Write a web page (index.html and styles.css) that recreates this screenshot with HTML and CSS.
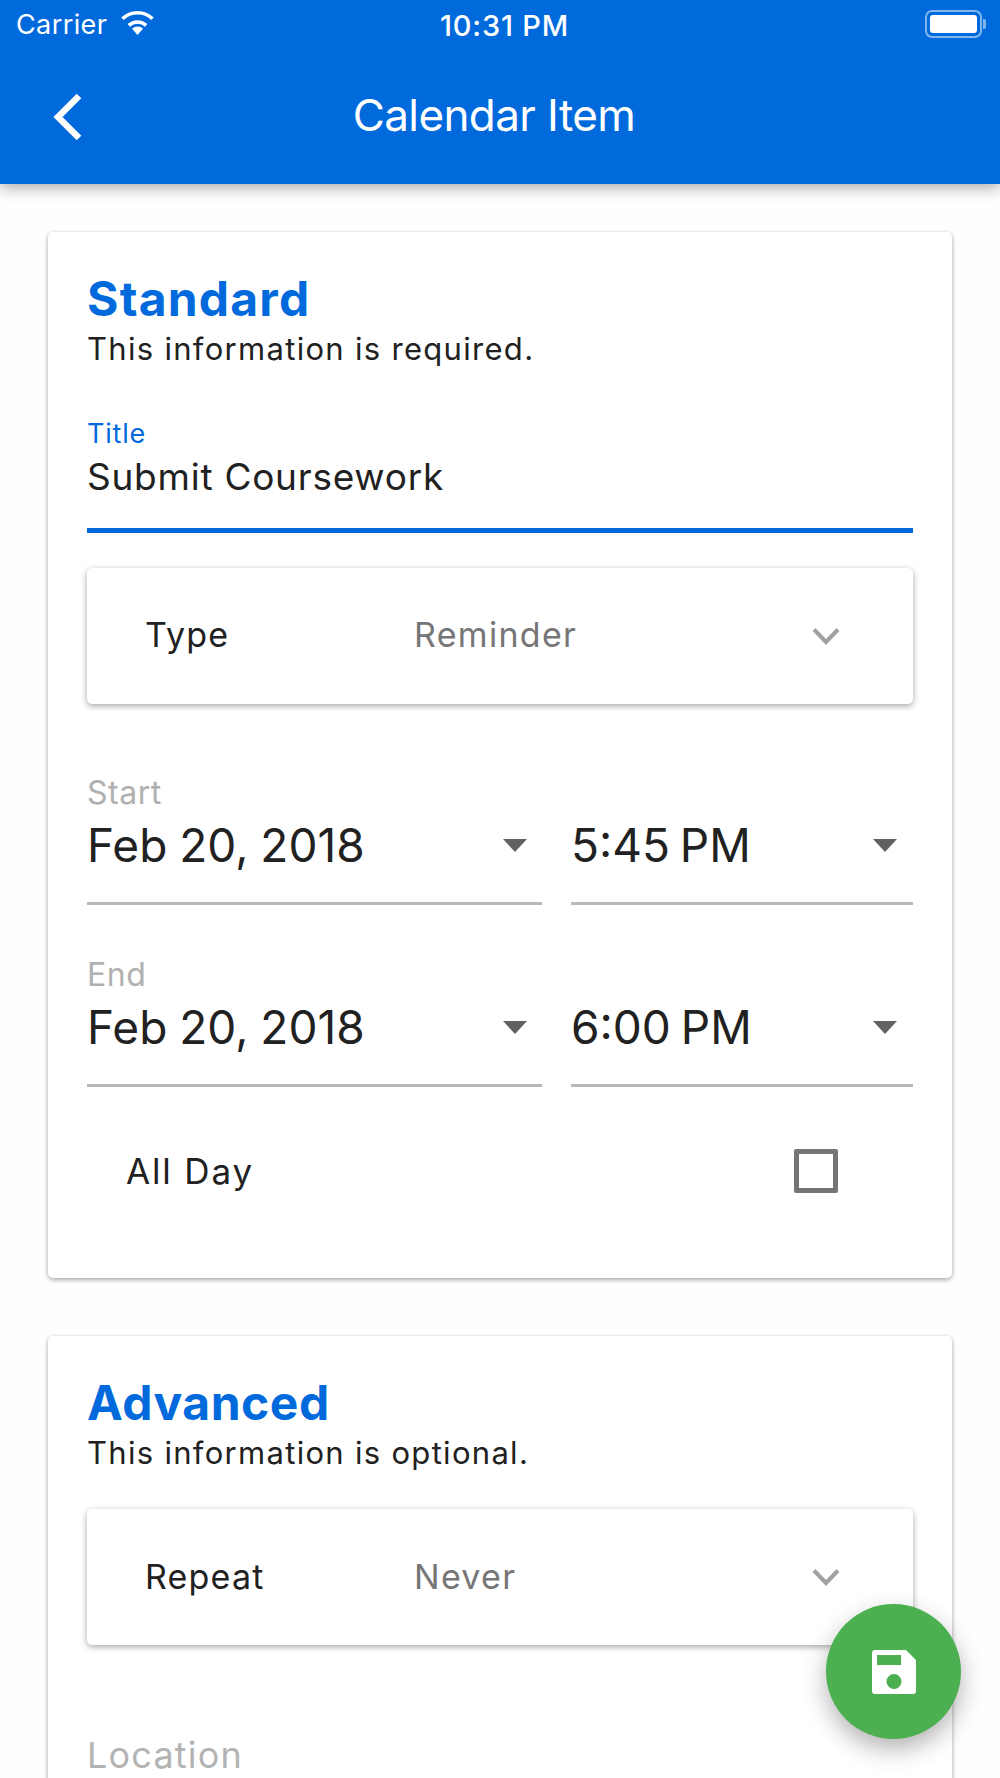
FILE: index.html
```html
<!DOCTYPE html>
<html lang="en">
<head>
<meta charset="utf-8">
<title>Calendar Item</title>
<link rel="stylesheet" href="styles.css">
</head>
<body>
<div class="screen">
  <header class="appbar">
    <div class="status">
      <div class="status-left">
        <span class="carrier">Carrier</span>
        <svg class="wifi" viewBox="0 0 35 24"><path d="M17.500 24 12 17.800a8 8 0 0 1 11 0z" fill="#fff"/><path d="M8.800 14.300a13 13 0 0 1 17.400 0" fill="none" stroke="#fff" stroke-width="3.600"/><path d="M2.500 7.700a22 22 0 0 1 30 0" fill="none" stroke="#fff" stroke-width="3.600"/></svg>
      </div>
      <span class="clock">10:31 PM</span>
      <div class="battery"><span class="battery-fill"></span></div>
    </div>
    <div class="nav">
      <svg class="back" viewBox="0 0 30 48"><path d="M26 3 5 24l21 21" fill="none" stroke="#fff" stroke-width="6.500"/></svg>
      <h1 class="nav-title">Calendar Item</h1>
    </div>
  </header>
  <main class="content">
    <section class="card card-standard">
      <h2 class="card-title">Standard</h2>
      <p class="card-desc">This information is required.</p>
      <div class="input-field">
        <label class="float-label">Title</label>
        <div class="input-value">Submit Coursework</div>
      </div>
      <div class="select-box">
        <span class="select-name">Type</span>
        <span class="select-value">Reminder</span>
        <svg class="chevron" viewBox="0 0 28 18"><path d="M2 2.500 14 15 26 2.500" fill="none" stroke="#a1a1a1" stroke-width="4"/></svg>
      </div>
      <div class="date-block">
        <div class="date-label">Start</div>
        <div class="date-row">
          <div class="picker picker-date"><span>Feb 20, 2018</span><i class="caret"></i></div>
          <div class="picker picker-time"><span>5:45 PM</span><i class="caret"></i></div>
        </div>
      </div>
      <div class="date-block">
        <div class="date-label">End</div>
        <div class="date-row">
          <div class="picker picker-date"><span>Feb 20, 2018</span><i class="caret"></i></div>
          <div class="picker picker-time"><span>6:00 PM</span><i class="caret"></i></div>
        </div>
      </div>
      <div class="check-row">
        <span class="check-label">All Day</span>
        <span class="checkbox"></span>
      </div>
    </section>
    <section class="card card-advanced">
      <h2 class="card-title">Advanced</h2>
      <p class="card-desc">This information is optional.</p>
      <div class="select-box select-repeat">
        <span class="select-name">Repeat</span>
        <span class="select-value">Never</span>
        <svg class="chevron" viewBox="0 0 28 18"><path d="M2 2.500 14 15 26 2.500" fill="none" stroke="#a1a1a1" stroke-width="4"/></svg>
      </div>
      <div class="placeholder">Location</div>
    </section>
  </main>
  <button class="fab" aria-label="Save">
    <svg class="fab-icon" viewBox="0 0 44 44"><path fill-rule="evenodd" fill="#fff" d="M3 0h31l10 10v31a3 3 0 0 1-3 3H3a3 3 0 0 1-3-3V3a3 3 0 0 1 3-3zM5 5v10h24V5zM22 24a7.500 7.500 0 1 0 0 15 7.500 7.500 0 0 0 0-15z"/></svg>
  </button>
</div>
</body>
</html>
```
FILE: styles.css
```css
* { box-sizing: border-box; margin: 0; padding: 0; }
html, body { width: 1000px; height: 1778px; overflow: hidden; background: #fff; }
body { font-family: Inter, "Liberation Sans", sans-serif; color: #212121; }
.screen { position: relative; width: 1000px; height: 1778px; overflow: hidden; background: #fefefe; }

.appbar { position: relative; z-index: 2; height: 184px; background: #006add; color: #fff; box-shadow: 0 4px 14px rgba(0,0,0,.32); }
.status { display: flex; align-items: center; justify-content: space-between; height: 48px; padding: 0 18px 0 16px; position: relative; }
.status-left { display: flex; align-items: center; gap: 13px; }
.carrier { font-size: 27px; letter-spacing: .4px; }
.wifi { width: 35px; height: 24px; margin-top: -2px; }
.clock { position: absolute; left: 440px; top: 9px; font-size: 29px; font-weight: 500; line-height: 34px; letter-spacing: .8px; }
.battery { position: relative; width: 57px; height: 28px; border: 2px solid rgba(255,255,255,.5); border-radius: 7px; padding: 3px; }
.battery::after { content: ""; position: absolute; right: -6px; top: 7px; width: 3px; height: 10px; background: rgba(255,255,255,.5); border-radius: 0 2px 2px 0; }
.battery-fill { display: block; height: 100%; background: #fff; border-radius: 3px; }
.nav { display: flex; align-items: center; justify-content: center; position: relative; height: 136px; padding: 0 12px 3px 0; }
.back { position: absolute; left: 53px; top: 45px; width: 30px; height: 48px; }
.nav-title { font-size: 44px; font-weight: 400; letter-spacing: -0.6px; }

.content { padding: 48px 48px 0; display: flex; flex-direction: column; gap: 58px; }
.card { background: #fff; border-radius: 5px; padding: 0 39px; box-shadow: 0 2px 5px rgba(0,0,0,.32), 0 0 2px rgba(0,0,0,.1); }
.card-standard { height: 1046px; padding-top: 42px; }
.card-advanced { padding-top: 42px; min-height: 600px; }
.card-title { font-size: 48px; font-weight: 700; color: #006add; line-height: 50px; letter-spacing: .5px; }
.card-standard .card-title { letter-spacing: 1.2px; }
.card-desc { font-size: 31px; line-height: 44px; margin-top: 3px; letter-spacing: 1.3px; }

.input-field { margin-top: 46px; height: 116px; border-bottom: 5px solid #006add; }
.float-label { display: block; font-size: 27px; line-height: 34px; color: #006add; letter-spacing: .8px; }
.input-value { font-size: 37px; line-height: 50px; margin-top: 1px; letter-spacing: .75px; }

.select-box { display: flex; align-items: center; height: 136px; margin-top: 35px; padding: 0 73px 0 58px; background: #fff; border-radius: 5px; box-shadow: 0 2px 6px rgba(0,0,0,.35); }
.select-repeat { margin-top: 34px; }
.select-name { width: 269px; font-size: 34px; letter-spacing: 1.2px; margin-bottom: 3px; }
.select-value { flex: 1; font-size: 34px; color: #767676; letter-spacing: 1.3px; margin-bottom: 3px; }
.select-repeat .select-name, .select-repeat .select-value { margin-bottom: 1px; }
.chevron { width: 28px; height: 18px; }

.date-block { margin-top: 70px; }
.date-block + .date-block { margin-top: 0; padding-top: 51px; }
.date-label { font-size: 32px; line-height: 38px; color: #b0b0b0; letter-spacing: .5px; }
.date-row { display: flex; gap: 29px; }
.picker { display: flex; align-items: center; justify-content: space-between; height: 93px; padding: 0 15px 24px 0; border-bottom: 3px solid #b8b8b8; font-size: 46px; font-weight: 420; }
.picker-date { width: 455px; word-spacing: -1px; }
.picker-time { width: 342px; padding-right: 16px; word-spacing: -3px; }
.caret { width: 0; height: 0; border-left: 12px solid transparent; border-right: 12px solid transparent; border-top: 13px solid #616161; }

.check-row { display: flex; align-items: center; justify-content: space-between; height: 162px; padding: 6px 75px 0 39px; }
.check-label { font-size: 35px; letter-spacing: 1.85px; }
.checkbox { width: 44px; height: 44px; border: 5px solid #757575; border-radius: 2px; }

.placeholder { margin-top: 88px; font-size: 36px; color: #b3b3b3; letter-spacing: 1.2px; }

.fab { position: absolute; left: 826px; top: 1604px; width: 135px; height: 135px; border: 0; border-radius: 50%; background: #4caf50; display: flex; align-items: center; justify-content: center; box-shadow: 0 10px 24px rgba(0,0,0,.3); z-index: 3; }
.fab-icon { width: 44px; height: 44px; }
```
